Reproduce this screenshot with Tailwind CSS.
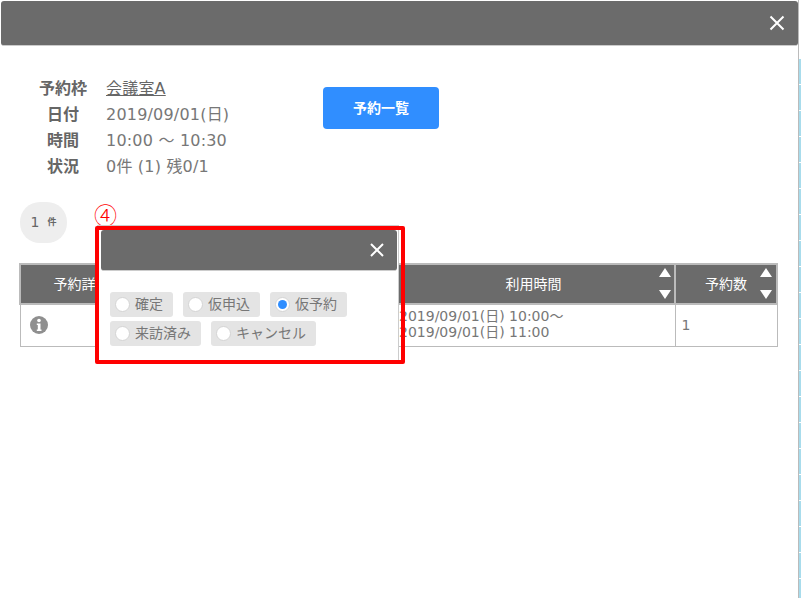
<!DOCTYPE html>
<html lang="ja">
<head>
    <meta charset="UTF-8">
    <title>予約詳細</title>
    <script src="https://cdn.jsdelivr.net/npm/@tailwindcss/browser@4"></script>
</head>
<body class="bg-white overflow-hidden font-['DejaVu_Sans','Noto_Sans_CJK_JP',sans-serif] text-[#777]">
<div class="relative w-[801px] h-[598px] overflow-hidden">
    <!-- page behind the dialog -->
    <div class="absolute top-0 left-[798px] w-px h-full bg-[#bbb]"></div>
    <div class="absolute top-[59px] bottom-0 left-[799px] w-[2px] bg-[repeating-linear-gradient(#a8dcec_0,#a8dcec_25px,#fff_25px,#fff_26px)]"></div>

    <div class="w-[798px] h-[598px] bg-white pt-px">
        <!-- dialog header -->
        <div class="h-[45px] ml-px bg-[#6b6b6b] rounded-[3px] border-b border-[#ccc] flex items-center justify-end pr-[13px]">
            <svg class="w-[16px] h-[16px]" viewBox="0 0 16 16"><path d="M1.5 1.5l13 13M14.5 1.5l-13 13" stroke="#fff" stroke-width="2"/></svg>
        </div>

        <!-- reservation info -->
        <div class="flex mt-[30px]">
            <dl class="ml-[27px] w-[296px] grid grid-cols-[72px_1fr] gap-x-[7px] text-[16px] leading-[26px] tracking-[0.2px]">
                <dt class="font-bold text-center text-[#666] tracking-normal">予約枠</dt><dd><a class="underline text-[#666]">会議室A</a></dd>
                <dt class="font-bold text-center text-[#666] tracking-normal">日付</dt><dd>2019/09/01(日)</dd>
                <dt class="font-bold text-center text-[#666] tracking-normal">時間</dt><dd>10:00 ～ 10:30</dd>
                <dt class="font-bold text-center text-[#666] tracking-normal">状況</dt><dd>0件 (1) 残0/1</dd>
            </dl>
            <button class="w-[116px] h-[42px] mt-[11px] bg-[#308eff] rounded-[4px] text-white font-bold text-[14px]">予約一覧</button>
        </div>

        <!-- count badge -->
        <div class="mt-[22px] ml-[20px] w-[47px] h-[41px] rounded-[20px] bg-[#eee] flex items-center justify-center gap-[8px] text-[#666] font-bold">
            <span class="text-[14px] font-normal">1</span><span class="text-[9px]">件</span>
        </div>

        <!-- table -->
        <table class="mt-[20px] ml-[19px] w-[759px] border-collapse table-fixed text-[14px]">
            <thead>
                <tr class="h-[40px] bg-[#6b6b6b] text-white font-normal">
                    <th class="w-[110px] font-normal border-2 border-[#bbb] border-r-0 text-[14px] pl-[12px]">予約詳細</th>
                    <th class="w-[269px] font-normal border-y-2 border-[#bbb]"></th>
                    <th class="font-normal border-y-2 border-[#bbb] relative pr-[6px]">利用時間
                        <svg class="absolute right-[3px] top-[3px] w-[12px] h-[31px]" viewBox="0 0 12 31"><path d="M6 0l6 9H0zM0 22h12l-6 9z" fill="#fff"/></svg>
                    </th>
                    <th class="w-[102px] font-normal border-2 border-[#bbb] relative">予約数
                        <svg class="absolute right-[4px] top-[3px] w-[12px] h-[31px]" viewBox="0 0 12 31"><path d="M6 0l6 9H0zM0 22h12l-6 9z" fill="#fff"/></svg>
                    </th>
                </tr>
            </thead>
            <tbody>
                <tr class="h-[42px]">
                    <td class="border border-[#bbb] border-r-0 pl-[9px]">
                        <svg class="w-[18px] h-[18px]" viewBox="0 0 18 18"><circle cx="9" cy="9" r="9" fill="#8f8f8f"/><circle cx="9" cy="4.5" r="1.8" fill="#fff"/><path d="M6.8 7.5h3.7v6h1v1.5H6.8v-1.5h1v-4.5h-1z" fill="#fff"/></svg>
                    </td>
                    <td class="border-y border-[#bbb]"></td>
                    <td class="border-y border-[#bbb] leading-[16px] pl-0 pb-[2px]">2019/09/01(日) 10:00～<br>2019/09/01(日) 11:00</td>
                    <td class="border border-[#bbb] pl-[6px]">1</td>
                </tr>
            </tbody>
        </table>
    </div>

    <!-- callout number -->
    <span class="absolute left-[94px] top-[203px] font-['Noto_Sans_CJK_JP'] font-light text-[23px] leading-[23px] text-[#f00]">④</span>

    <!-- status popup -->
    <div class="absolute left-[97px] top-[225px] w-[302px] h-[137px] bg-white border border-[#ccc] pt-[4px] pl-[3px]">
        <div class="h-[41px] w-[296px] bg-[#6b6b6b] rounded-[3px] border-b border-[#ccc] flex items-center justify-end pr-[13px]">
            <svg class="w-[14px] h-[14px]" viewBox="0 0 14 14"><path d="M1 1l12 12M13 1L1 13" stroke="#fff" stroke-width="2"/></svg>
        </div>
        <div class="mt-[21px] ml-[9px] flex flex-wrap gap-x-[10px] gap-y-[4px] w-[270px] text-[14px]">
            <label class="h-[25px] rounded-[3px] bg-[#e4e4e4] flex items-center pl-[5px] pr-[10px] gap-[5px]"><span class="shrink-0 w-[15px] h-[15px] rounded-full bg-white border border-[#d4d4d4]"></span>確定</label>
            <label class="h-[25px] rounded-[3px] bg-[#e4e4e4] flex items-center pl-[5px] pr-[10px] gap-[5px]"><span class="shrink-0 w-[15px] h-[15px] rounded-full bg-white border border-[#d4d4d4]"></span>仮申込</label>
            <label class="h-[25px] rounded-[3px] bg-[#e4e4e4] flex items-center pl-[5px] pr-[10px] gap-[5px]"><span class="shrink-0 w-[15px] h-[15px] rounded-full bg-white border border-[#d4d4d4] flex items-center justify-center"><span class="w-[9px] h-[9px] rounded-full bg-[#308eff]"></span></span>仮予約</label>
            <label class="h-[25px] rounded-[3px] bg-[#e4e4e4] flex items-center pl-[5px] pr-[10px] gap-[5px] basis-[91px]"><span class="shrink-0 w-[15px] h-[15px] rounded-full bg-white border border-[#d4d4d4]"></span>来訪済み</label>
            <label class="h-[25px] rounded-[3px] bg-[#e4e4e4] flex items-center pl-[5px] pr-[10px] gap-[5px]"><span class="shrink-0 w-[15px] h-[15px] rounded-full bg-white border border-[#d4d4d4]"></span>キャンセル</label>
        </div>
    </div>
    <!-- red highlight frame drawn over the popup -->
    <div class="absolute left-[95px] top-[226px] w-[310px] h-[138px] border-[4px] border-[#f00] rounded-[2px]"></div>
</div>
</body>
</html>
